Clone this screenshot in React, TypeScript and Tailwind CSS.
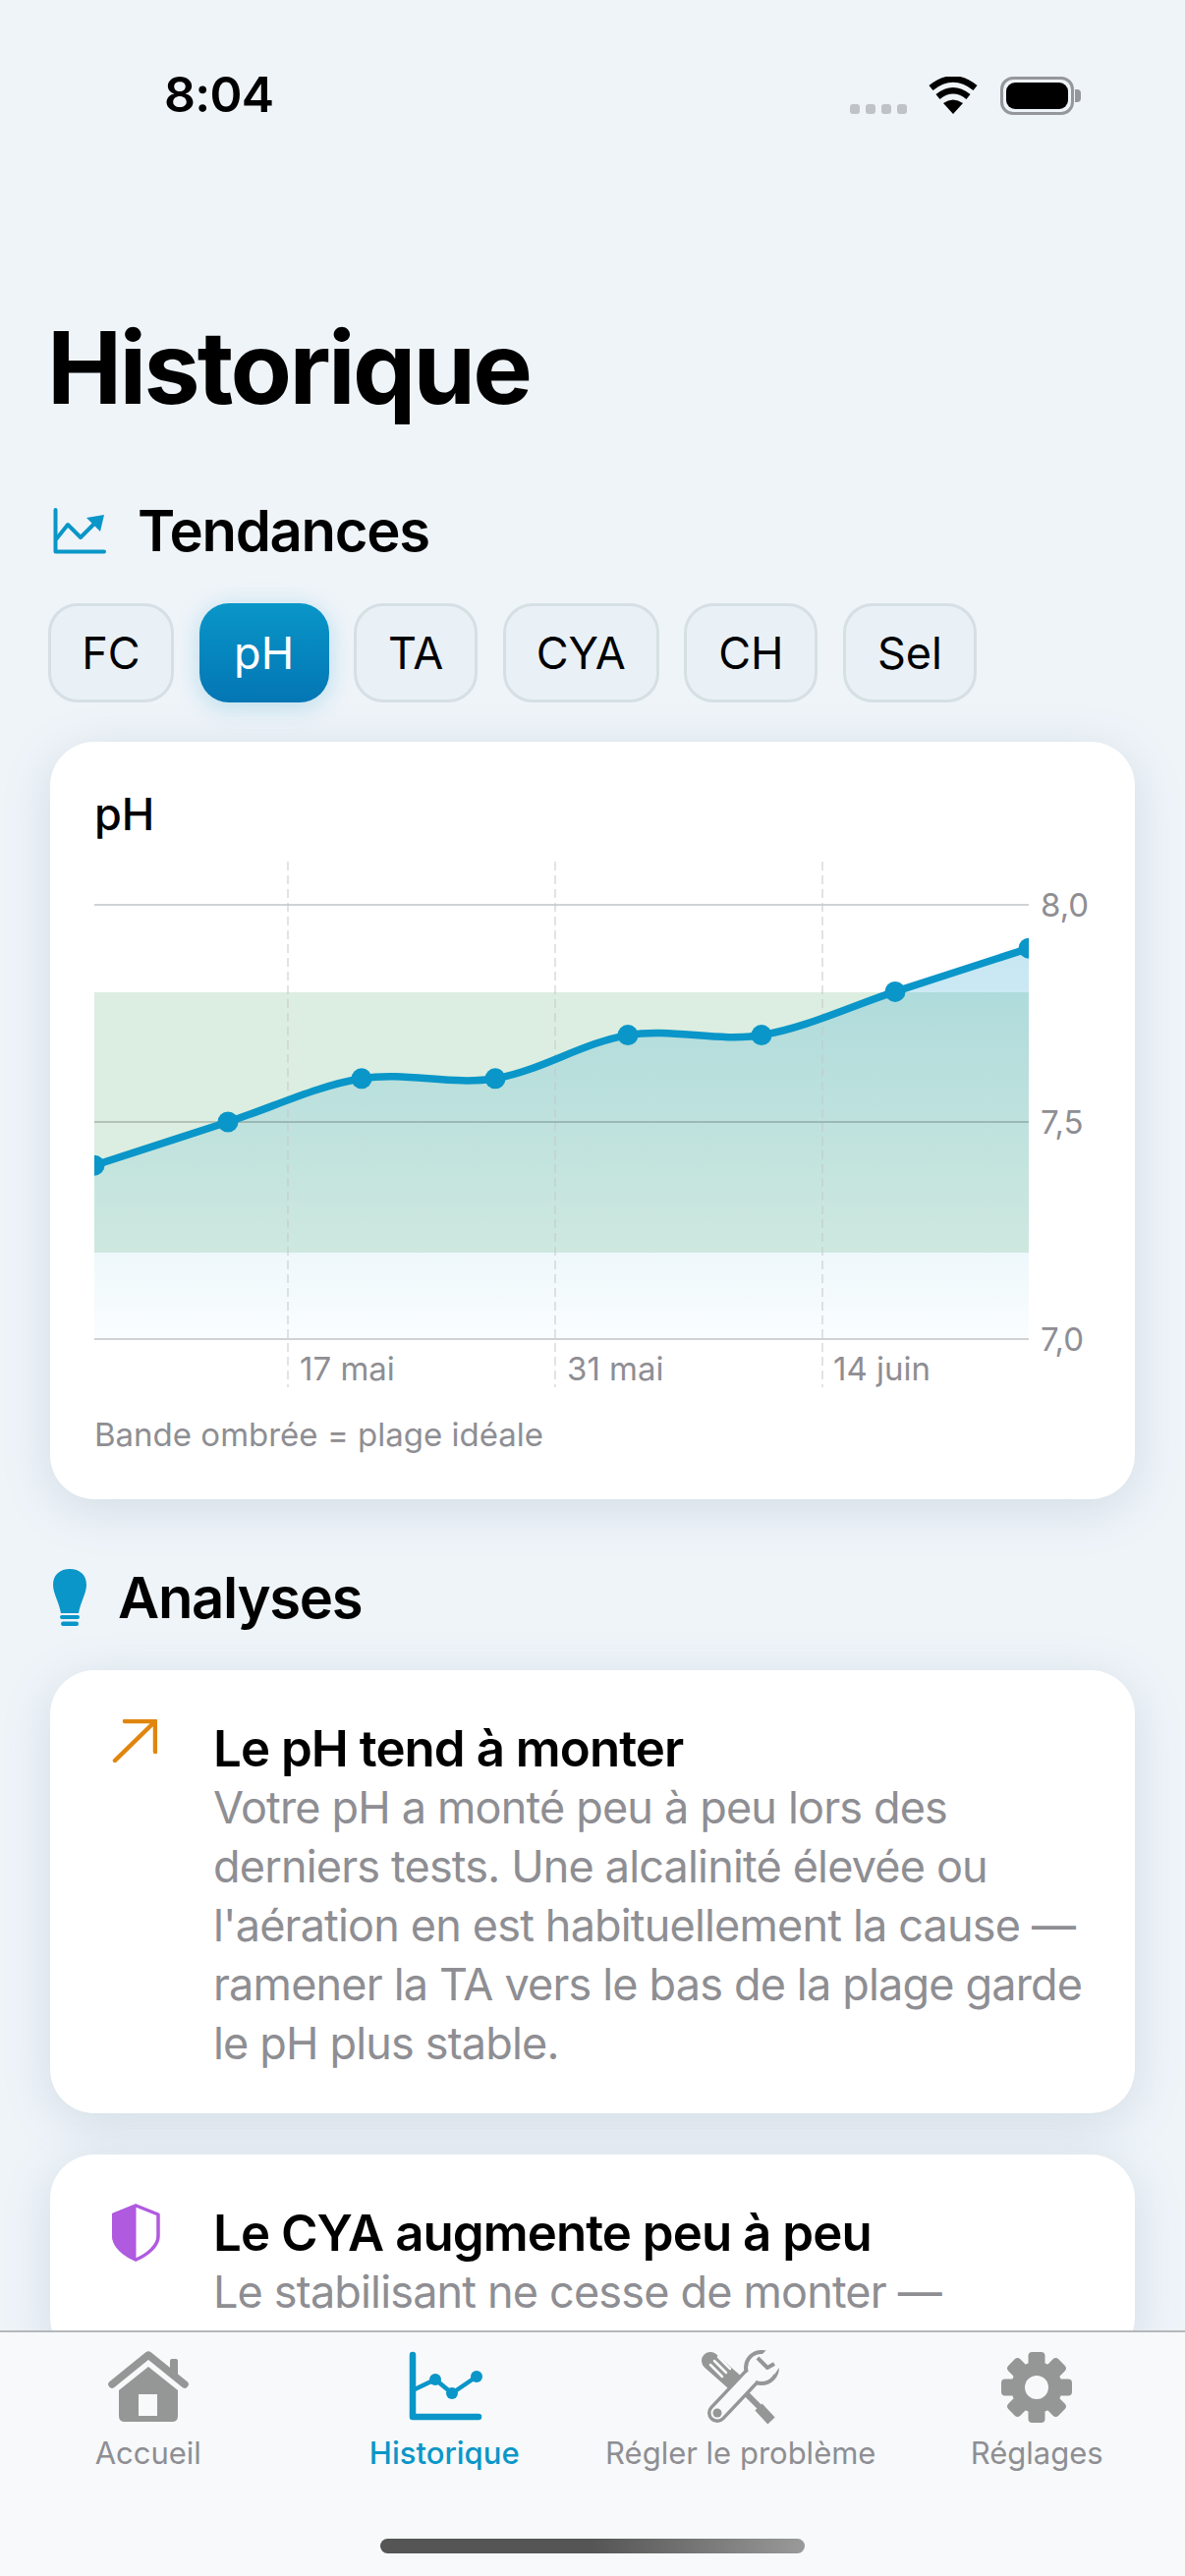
const font = { fontFamily: "Inter, 'Noto Sans', sans-serif" };

const xs = [96, 232, 368, 504, 639, 775, 911, 1047];
const values = [7.4, 7.5, 7.6, 7.6, 7.7, 7.7, 7.8, 7.9];
const toY = (v: number) => 1363 - (v - 7) * 442;
const pts = xs.map((x, i) => [x, toY(values[i])]);

// catmull-rom through the points, the way the chart smooths its line
function curve() {
  let d = `M${pts[0][0]} ${pts[0][1]}`;
  for (let i = 0; i < pts.length - 1; i++) {
    const p0 = pts[Math.max(i - 1, 0)];
    const p1 = pts[i];
    const p2 = pts[i + 1];
    const p3 = pts[Math.min(i + 2, pts.length - 1)];
    const c1x = p1[0] + (p2[0] - p0[0]) / 6;
    const c1y = p1[1] + (p2[1] - p0[1]) / 6;
    const c2x = p2[0] - (p3[0] - p1[0]) / 6;
    const c2y = p2[1] - (p3[1] - p1[1]) / 6;
    d += ` C${c1x} ${c1y} ${c2x} ${c2y} ${p2[0]} ${p2[1]}`;
  }
  return d;
}

function Chart() {
  const line = curve();
  return (
    <svg width="1050" height="556" viewBox="96 870 1050 556" className="block mt-[14px]">
      <defs>
        <linearGradient id="area" x1="0" y1="921" x2="0" y2="1363" gradientUnits="userSpaceOnUse">
          <stop offset="0" stopColor="#0a96c8" stopOpacity="0.26" />
          <stop offset="1" stopColor="#0a96c8" stopOpacity="0.02" />
        </linearGradient>
        <clipPath id="plot">
          <rect x="96" y="870" width="951" height="500" />
        </clipPath>
      </defs>
      <rect x="96" y="1010" width="951" height="265" fill="#dceee1" />
      <path d={`${line} L1047 1363 L96 1363 Z`} fill="url(#area)" />
      <g stroke="#d0d3d5" strokeWidth="2">
        <line x1="96" x2="1047" y1="921" y2="921" />
        <line x1="96" x2="1047" y1="1363" y2="1363" />
      </g>
      <line x1="96" x2="1047" y1="1142" y2="1142" stroke="#000" strokeOpacity="0.18" strokeWidth="2" />
      <g stroke="#c4c7c9" strokeWidth="1" strokeDasharray="9 5">
        <line x1="293" x2="293" y1="877" y2="1412" />
        <line x1="565" x2="565" y1="877" y2="1412" />
        <line x1="837" x2="837" y1="877" y2="1412" />
      </g>
      <g clipPath="url(#plot)">
        <path d={line} fill="none" stroke="#0a96c8" strokeWidth="7.5" strokeLinecap="round" />
        {pts.map(([x, y]) => (
          <circle key={x} cx={x} cy={y} r="10.5" fill="#0a96c8" />
        ))}
      </g>
      <g fill="#8e8e93" fontSize="33" style={font}>
        <text x="305" y="1405">17 mai</text>
        <text x="577" y="1405">31 mai</text>
        <text x="848" y="1405">14 juin</text>
        <text x="1059" y="933">8,0</text>
        <text x="1059" y="1154">7,5</text>
        <text x="1059" y="1375">7,0</text>
      </g>
    </svg>
  );
}

function StatusBar() {
  return (
    <div className="h-[160px] flex items-start justify-between pl-[167px] pr-[106px] pt-[66px]">
      <span className="text-[50px] leading-[60px] font-semibold text-black tracking-[-0.7px]">8:04</span>
      <div className="flex items-start pt-[12px]">
        <div className="flex gap-[6px] mt-[28px] mr-[22px]">
          <div className="w-[10px] h-[10px] rounded-[3px] bg-[#bfc3c8]" />
          <div className="w-[10px] h-[10px] rounded-[3px] bg-[#bfc3c8]" />
          <div className="w-[10px] h-[10px] rounded-[3px] bg-[#bfc3c8]" />
          <div className="w-[10px] h-[10px] rounded-[3px] bg-[#bfc3c8]" />
        </div>
        <svg width="50" height="38" viewBox="0 0 50 38" className="mr-[23px]">
          <path d="M25 38 L15 27 Q25 20 35 27 Z" fill="#000" />
          <path d="M9.5 20.5 Q25 8 40.5 20.5" fill="none" stroke="#000" strokeWidth="6.5" />
          <path d="M2.5 11.5 Q25 -6.5 47.5 11.5" fill="none" stroke="#000" strokeWidth="6.5" />
        </svg>
        <div className="w-[75px] h-[39px] rounded-[13px] border-[3px] border-[#94979b] p-[3px]">
          <div className="w-full h-full rounded-[9px] bg-black" />
        </div>
        <div className="w-[6px] h-[13px] mt-[13px] ml-[1px] rounded-r-[4px] bg-[#94979b]" />
      </div>
    </div>
  );
}

function Pill({ label, width, active }: { label: string; width: string; active?: boolean }) {
  if (active) {
    return (
      <div className={`${width} h-[101px] rounded-[30px] flex items-center justify-center text-[45px] text-white bg-gradient-to-b from-[#0a96c8] to-[#0476b4] shadow-[0_4px_24px_rgba(10,150,200,0.25)]`}>
        {label}
      </div>
    );
  }
  return (
    <div className={`${width} h-[101px] rounded-[30px] flex items-center justify-center text-[45px] text-black bg-[#e9f1f7] border-[3px] border-[#d6e0e4]`}>
      {label}
    </div>
  );
}

function TrendIcon() {
  return (
    <svg width="54" height="47" viewBox="0 0 54 47">
      <path d="M2.5 2 V44.5 H52" fill="none" stroke="#0a96c8" strokeWidth="4" strokeLinecap="round" strokeLinejoin="round" />
      <path d="M3 32 L15 17 L28 30 L44 14" fill="none" stroke="#0a96c8" strokeWidth="4" strokeLinejoin="round" />
      <path d="M52 7 L34 10 L48 24 Z" fill="#0a96c8" />
    </svg>
  );
}

function BulbIcon() {
  return (
    <svg width="34" height="58" viewBox="0 0 34 58">
      <path d="M17 0 C7 0 0 6 0 16 C0 25 6 33 8 45 H26 C28 33 34 25 34 16 C34 6 27 0 17 0 Z" fill="#0a96c8" />
      <rect x="7" y="47" width="20" height="4" rx="2" fill="#0a96c8" />
      <rect x="8" y="53.5" width="18" height="4.5" rx="2.2" fill="#0a96c8" />
    </svg>
  );
}

function ArrowIcon() {
  return (
    <svg width="46" height="44" viewBox="0 0 46 44">
      <path d="M13 2 H44 V33 M44 2 L3 42" fill="none" stroke="#e0860f" strokeWidth="4.5" strokeLinecap="round" strokeLinejoin="round" />
    </svg>
  );
}

function ShieldIcon() {
  return (
    <svg width="49" height="59" viewBox="0 0 49 59">
      <path d="M24.5 2 L47 11 V33 C47 43 36 52 24.5 57 C13 52 2 43 2 33 V11 Z" fill="#fff" stroke="#b05ae0" strokeWidth="3.5" strokeLinejoin="round" />
      <path d="M24.5 0 L0 10 V33 C0 44 12 54 24.5 59 Z" fill="#b05ae0" />
    </svg>
  );
}

function InsightCard({ icon, title, children }: { icon: React.ReactNode; title: string; children: React.ReactNode }) {
  return (
    <div className="mx-[51px] w-[1104px] shrink-0 rounded-[45px] bg-white shadow-[0_10px_50px_rgba(80,115,140,0.18)] flex pt-[50px] pb-[41px]">
      <div className="w-[166px] shrink-0 pl-[63px]">{icon}</div>
      <div className="flex-1 pr-[50px]">
        <div className="text-[51px] leading-[60px] font-semibold text-black tracking-[-0.95px]">{title}</div>
        <div className="text-[45px] leading-[60px] text-[#8e8e93] tracking-[-0.83px]">{children}</div>
      </div>
    </div>
  );
}

function HomeIcon() {
  return (
    <svg width="82" height="74" viewBox="0 0 82 74">
      <path d="M4 34 L41 4 L78 34" fill="none" stroke="#959796" strokeWidth="7.5" strokeLinecap="round" strokeLinejoin="round" />
      <rect x="63" y="8" width="8" height="18" rx="2" fill="#959796" />
      <path fillRule="evenodd" d="M41 16 L71 40 V66 Q71 72 65 72 H17 Q11 72 11 66 V40 Z M31 44 V66 H50 V44 Z" fill="#959796" />
    </svg>
  );
}

function HistoryIcon() {
  return (
    <svg width="82" height="74" viewBox="0 0 82 74">
      <path d="M9 4 V67 H76" fill="none" stroke="#0a96c8" strokeWidth="6.5" strokeLinecap="round" strokeLinejoin="round" />
      <path d="M9 40 L32 29 L49 43 L74 26" fill="none" stroke="#0a96c8" strokeWidth="4.5" />
      <circle cx="32" cy="29" r="6" fill="#0a96c8" />
      <circle cx="49" cy="43" r="6" fill="#0a96c8" />
      <circle cx="74" cy="26" r="6" fill="#0a96c8" />
    </svg>
  );
}

function ToolsIcon() {
  const bg = "#f7f9fa";
  return (
    <svg width="80" height="79" viewBox="0 0 80 79">
      <path d="M9 12 L35 35" stroke="#959796" strokeWidth="18" strokeLinecap="round" />
      <path d="M35 35 L62 62" stroke="#959796" strokeWidth="6" />
      <path d="M58 59 L71 73" stroke="#959796" strokeWidth="10" />
      <g stroke={bg} strokeWidth="2.5" strokeLinecap="round">
        <path d="M9 16 L21 28" />
        <path d="M13 12 L25 24" />
        <path d="M17 8 L29 20" />
      </g>
      <path d="M16 65 L50 29" stroke="#959796" strokeWidth="20" strokeLinecap="round" />
      <circle cx="61" cy="19" r="18" fill="#959796" />
      <circle cx="61" cy="19" r="14" fill={bg} />
      <path d="M16 65 L50 29" stroke={bg} strokeWidth="13" strokeLinecap="round" />
      <path d="M66 19 L58 9 L70 -3 L84 12 L74 26 Z" fill={bg} />
      <path d="M57 9 L67 19 L74 15" fill="none" stroke="#959796" strokeWidth="4" strokeLinejoin="round" />
      <circle cx="16" cy="65" r="4.5" fill="#959796" />
    </svg>
  );
}

function GearIcon() {
  const angles = [0, 45, 90, 135, 180, 225, 270, 315];
  return (
    <svg width="74" height="74" viewBox="-37 -37 74 74">
      {angles.map((a) => (
        <rect key={a} x="-8.5" y="-36" width="17" height="18" rx="4" fill="#959796" transform={`rotate(${a})`} />
      ))}
      <circle r="26" fill="#959796" />
      <circle r="12" fill="#f7f9fa" />
    </svg>
  );
}

function TabItem({ icon, label, active }: { icon: React.ReactNode; label: string; active?: boolean }) {
  return (
    <div className="flex flex-col items-center">
      <div className="h-[80px] flex items-center justify-center">{icon}</div>
      <span className={`mt-[9px] text-[31px] leading-[36px] whitespace-nowrap ${active ? "text-[#0a96c8] font-medium" : "text-[#8e8e93]"}`}>
        {label}
      </span>
    </div>
  );
}

export default function App() {
  return (
    <div className="w-[1206px] h-[2622px] flex flex-col overflow-hidden bg-[#eff4f9]" style={font}>
      <div className="flex-1 min-h-0 overflow-hidden">
        <StatusBar />
        <h1 className="pl-[48px] mt-[153px] text-[102px] leading-[122px] font-bold text-black tracking-[-2.7px]">Historique</h1>
        <div className="flex items-center pl-[54px] mt-[69px] h-[72px]">
          <TrendIcon />
          <h2 className="ml-[32px] text-[58px] font-semibold text-black tracking-[-1.3px]">Tendances</h2>
        </div>
        <div className="flex gap-[25.6px] pl-[49px] mt-[38px]">
          <Pill label="FC" width="w-[128px]" />
          <Pill label="pH" width="w-[132px]" active />
          <Pill label="TA" width="w-[126px]" />
          <Pill label="CYA" width="w-[159px]" />
          <Pill label="CH" width="w-[136px]" />
          <Pill label="Sel" width="w-[136px]" />
        </div>
        <div className="ml-[51px] mt-[40px] w-[1104px] h-[771px] rounded-[45px] bg-white shadow-[0_10px_50px_rgba(80,115,140,0.18)] pt-[47px] pl-[45px]">
          <div className="text-[45px] leading-[54px] font-medium text-black">pH</div>
          <Chart />
          <div className="mt-[14px] text-[33px] leading-[40px] text-[#8e8e93]">Bande ombrée = plage idéale</div>
        </div>
        <div className="flex items-center pl-[54px] mt-[66px] h-[68px]">
          <BulbIcon />
          <h2 className="ml-[32px] text-[58px] font-semibold text-black tracking-[-1.3px]">Analyses</h2>
        </div>
        <div className="flex flex-col gap-[42px] mt-[40px]">
          <InsightCard icon={<ArrowIcon />} title="Le pH tend à monter">
            Votre pH a monté peu à peu lors des derniers tests. Une alcalinité élevée ou l'aération en est habituellement la cause — ramener la TA vers le bas de la plage garde le pH plus stable.
          </InsightCard>
          <InsightCard icon={<ShieldIcon />} title="Le CYA augmente peu à peu">
            Le stabilisant ne cesse de monter —
          </InsightCard>
        </div>
      </div>
      <div className="h-[250px] shrink-0 bg-[#f7f9fa] border-t-2 border-[#b5b8ba] relative">
        <div className="grid grid-cols-4 pt-[16px]">
          <TabItem icon={<HomeIcon />} label="Accueil" />
          <TabItem icon={<HistoryIcon />} label="Historique" active />
          <TabItem icon={<ToolsIcon />} label="Régler le problème" />
          <TabItem icon={<GearIcon />} label="Réglages" />
        </div>
        <div className="absolute left-[387px] top-[210px] w-[432px] h-[15px] rounded-full bg-gradient-to-r from-[#555555] via-[#555555] to-[#9a9a9a]" />
      </div>
    </div>
  );
}
